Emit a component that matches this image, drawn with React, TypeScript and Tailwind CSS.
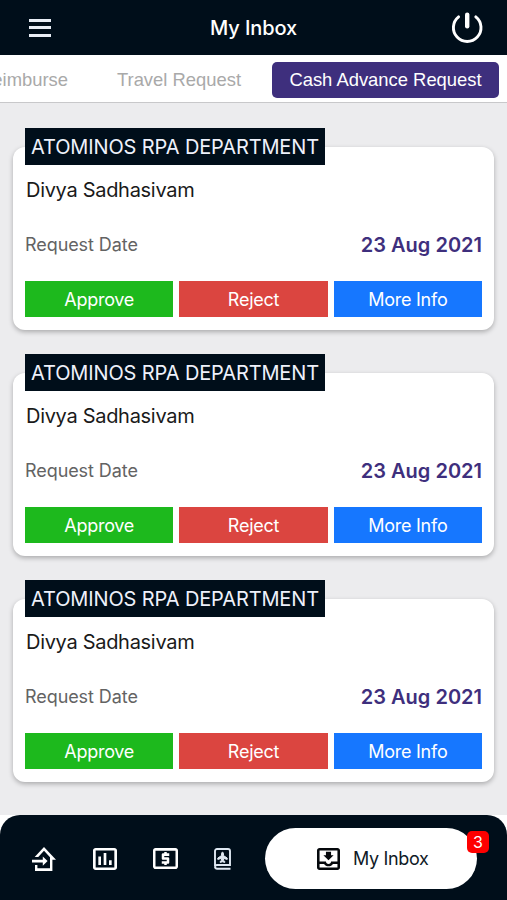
import clsx from 'clsx';

type tRequest = {
  id: number;
  department: string;
  name: string;
  date: string;
};

const requests: tRequest[] = [
  {
    id: 1,
    department: 'ATOMINOS RPA DEPARTMENT',
    name: 'Divya Sadhasivam',
    date: '23 Aug 2021',
  },
  {
    id: 2,
    department: 'ATOMINOS RPA DEPARTMENT',
    name: 'Divya Sadhasivam',
    date: '23 Aug 2021',
  },
  {
    id: 3,
    department: 'ATOMINOS RPA DEPARTMENT',
    name: 'Divya Sadhasivam',
    date: '23 Aug 2021',
  },
];

type tIconProps = {
  viewBox: string;
  d: string;
  className: string;
};

function Icon({ viewBox, d, className }: tIconProps) {
  return (
    <svg
      viewBox={viewBox}
      preserveAspectRatio="none"
      fill="currentColor"
      fillRule="evenodd"
      className={clsx('block shrink-0', className)}
    >
      <path d={d} />
    </svg>
  );
}

function PowerIcon() {
  return (
    <svg
      viewBox="0 0 32 32"
      fill="none"
      stroke="currentColor"
      strokeLinecap="round"
      className="block h-8 w-8"
    >
      <path d="M7.6 4.9a13.8 13.8 0 1 0 17.2 0" strokeWidth="2.9" />
      <path d="M16.2 2.6v11.6" strokeWidth="4.4" />
    </svg>
  );
}

function PassportIcon() {
  return (
    <svg
      viewBox="0 0 17 22"
      fill="none"
      stroke="currentColor"
      className="block h-[22px] w-[17px] shrink-0 text-[#dfe8f2]"
    >
      <path
        d="M16.5 20.8H3.2A2.2 2.2 0 0 1 1 18.6V3A2 2 0 0 1 3 1h11a2 2 0 0 1 2 2v14H3.2A2 2 0 0 0 1 18.8"
        strokeWidth="1.9"
      />
      <path
        d="M8.5 4.3c-.7 0-1 .6-1 1.3v2L3.8 10v1.4l3.7-1v2l-1.3 1v1l2.3-.6 2.3.6v-1l-1.3-1v-2l3.7 1V10L9.5 7.6v-2c0-.7-.3-1.3-1-1.3z"
        fill="currentColor"
        strokeWidth="1"
      />
    </svg>
  );
}

function Header() {
  return (
    <header className="grid h-[55px] grid-cols-3 items-center bg-[#000e1a] pr-6 pl-[29px] text-white">
      <div className="flex w-[22px] flex-col gap-[4.5px]">
        <span className="h-[3px] bg-[#e9eef6]" />
        <span className="h-[3px] bg-[#e9eef6]" />
        <span className="h-[3px] bg-[#e9eef6]" />
      </div>
      <h1 className="pr-[5px] text-center font-['Inter',sans-serif] text-xl font-medium tracking-[-0.1px]">
        My Inbox
      </h1>
      <div className="flex justify-end">
        <PowerIcon />
      </div>
    </header>
  );
}

function Tabs() {
  return (
    <div className="flex h-12 items-center justify-end overflow-hidden border-b border-[#c8c8ca] bg-white pt-0.5 pr-2 font-['Liberation_Sans',Arial,sans-serif] text-[18.4px] whitespace-nowrap text-[#a9a9a9]">
      <div className="mr-[49px] shrink-0">Reimburse</div>
      <div className="mr-[31px] shrink-0">Travel Request</div>
      <div className="flex h-9 w-[227px] shrink-0 items-center justify-center rounded-[5px] bg-[#3e2f7d] text-white">
        Cash Advance Request
      </div>
    </div>
  );
}

type tActionProps = {
  label: string;
  className: string;
};

function Action({ label, className }: tActionProps) {
  return (
    <button
      type="button"
      className={clsx(
        'h-9 flex-1 pt-px text-lg tracking-[-0.25px] text-white',
        className
      )}
    >
      {label}
    </button>
  );
}

function RequestCard({ request }: { request: tRequest }) {
  return (
    <section className="h-[183px] rounded-xl bg-white px-3 shadow-[0_2px_5px_rgba(0,0,0,0.28)]">
      <div className="-mt-[19px] flex h-[37px] w-[300px] items-center justify-center bg-[#000e1a] pt-px text-xl tracking-[-0.13px] whitespace-nowrap text-[#eef1fb]">
        {request.department}
      </div>
      <div className="mt-[11px] pl-px text-xl leading-7 tracking-[-0.3px] text-[#1a1a1a]">
        {request.name}
      </div>
      <div className="mt-[27px] flex h-7 items-center justify-between">
        <span className="text-lg tracking-[-0.07px] text-[#636363]">
          Request Date
        </span>
        <span className="text-xl font-semibold text-[#3e2f7d]">
          {request.date}
        </span>
      </div>
      <div className="mt-[22px] flex gap-1.5">
        <Action label="Approve" className="bg-[#1db91d]" />
        <Action label="Reject" className="bg-[#db4540]" />
        <Action label="More Info" className="bg-[#1677ff]" />
      </div>
    </section>
  );
}

function BottomNav() {
  return (
    <div className="bg-white">
      <nav className="flex h-[85px] items-center rounded-t-[20px] bg-[#000e1a] pt-0.5 pl-8 text-white">
        <Icon
          className="h-6 w-6"
          viewBox="2 3 20 17"
          d="M15 13L11 16.3V13.9H2V12.1H11V9.7L15 13M4.5 20V15.8H6.5V18H17V10.19L12 5.69L7.21 10H4.22L12 3L22 12H19V20H4.5Z"
        />
        <Icon
          className="ml-[37px] h-[22px] w-6"
          viewBox="3 3 18 18"
          d="M9 17H7v-7h2v7zm4 0h-2V7h2v10zm4 0h-2v-4h2v4zm2 2H5V5h14v14zm0-16H5c-1.1 0-2 .9-2 2v14c0 1.1.9 2 2 2h14c1.1 0 2-.9 2-2V5c0-1.1-.9-2-2-2z"
        />
        <Icon
          className="ml-9 h-[21px] w-[25px]"
          viewBox="2 4 20 16"
          d="M11 17h2v-1h1c.55 0 1-.45 1-1v-3c0-.55-.45-1-1-1h-3v-1h4V8h-2V7h-2v1h-1c-.55 0-1 .45-1 1v3c0 .55.45 1 1 1h3v1H9v2h2v1zm9-13H4c-1.11 0-1.99.89-1.99 2L2 18c0 1.11.89 2 2 2h16c1.11 0 2-.89 2-2V6c0-1.11-.89-2-2-2zm0 14H4V6h16v12z"
        />
        <div className="ml-9">
          <PassportIcon />
        </div>
        <div className="relative ml-[34px] flex h-[61px] w-[212px] items-center rounded-full bg-white pl-[52px] text-[#101a26]">
          <Icon
            className="h-[22px] w-[23px] text-[#05080c]"
            viewBox="3 3 18 18"
            d="M19 3H5c-1.1 0-2 .9-2 2v14c0 1.1.9 2 2 2h14c1.1 0 2-.9 2-2V5c0-1.1-.9-2-2-2zm0 16H5v-3h3.56c.69 1.19 1.97 2 3.45 2s2.75-.81 3.45-2H19v3zm0-5h-4.99c0 1.1-.9 2-2 2s-2-.9-2-2H5V5h14v9zm-3-5h-2V6h-4v3H8l4 4 4-4z"
          />
          <span className="ml-[13px] text-lg tracking-[-0.35px]">My Inbox</span>
          <span className="absolute top-[3px] -right-3 flex h-[22px] w-[22px] items-center justify-center rounded-[5px] bg-[#fe0000] text-base text-white">
            3
          </span>
        </div>
      </nav>
    </div>
  );
}

function App() {
  return (
    <div className="flex h-[900px] w-[507px] flex-col overflow-hidden bg-[#ececee] font-['Inter',sans-serif]">
      <Header />
      <Tabs />
      <main className="flex flex-1 flex-col gap-[43px] px-[13px] pt-11">
        {requests.map((request) => (
          <RequestCard key={request.id} request={request} />
        ))}
      </main>
      <BottomNav />
    </div>
  );
}

export default App;
